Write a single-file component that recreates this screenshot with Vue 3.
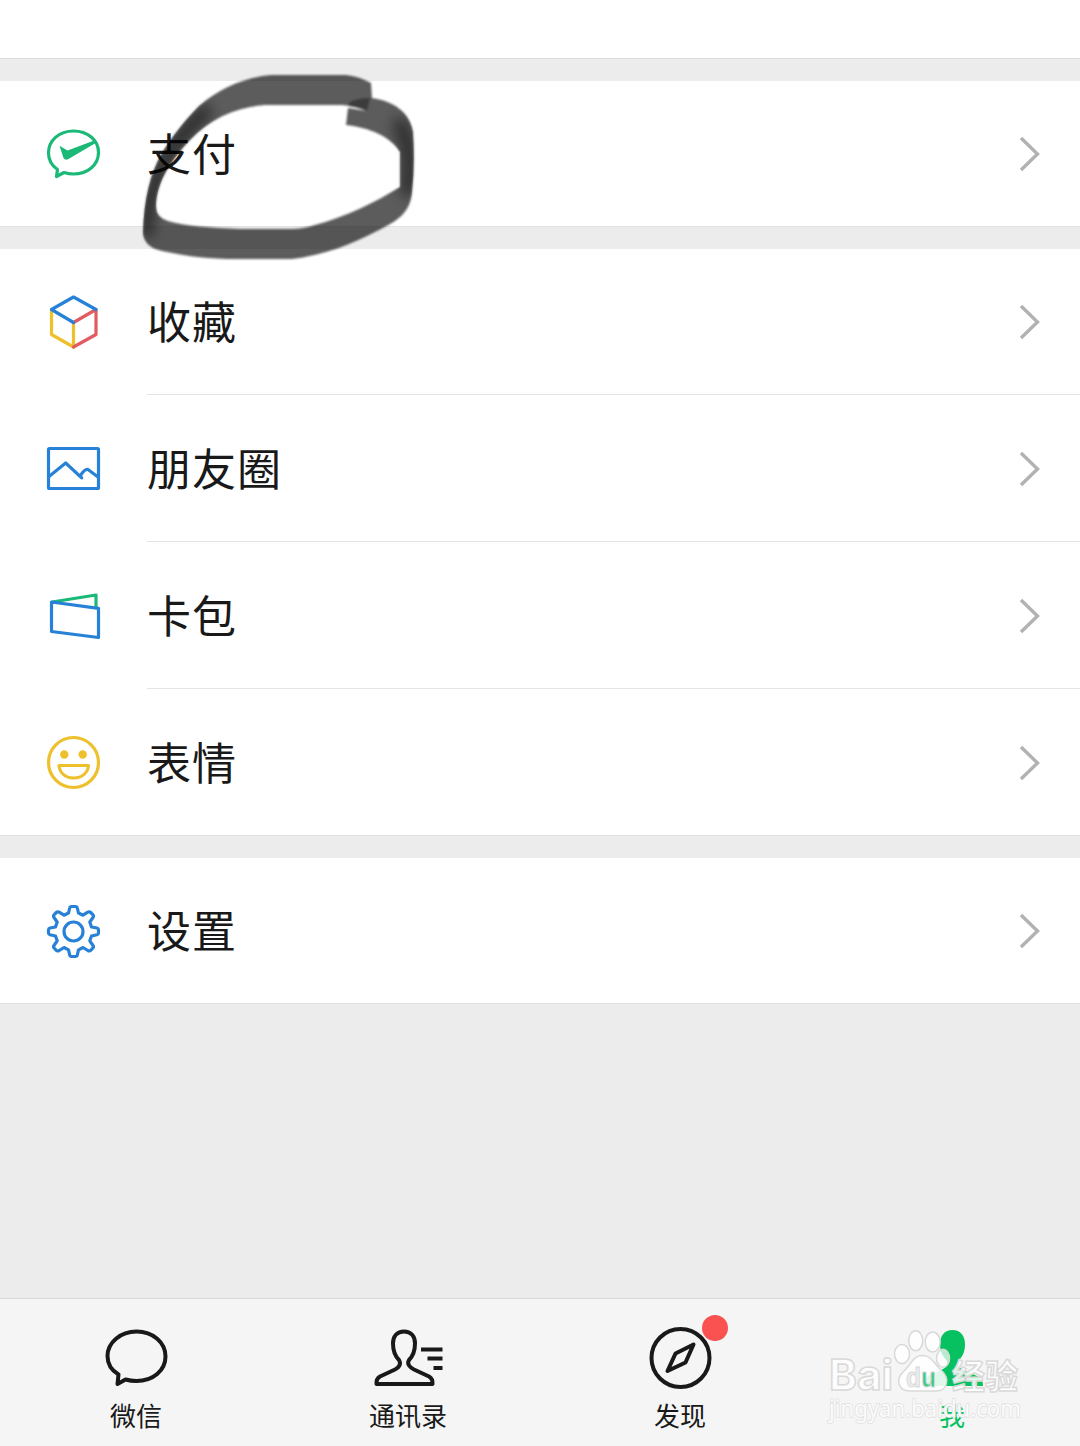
<script setup>
import { ref } from 'vue';

// Rows are grouped the way the page splits them with grey gaps.
const groups = [
	[{ id: 'pay', label: '支付' }],
	[
		{ id: 'favorites', label: '收藏' },
		{ id: 'moments', label: '朋友圈' },
		{ id: 'cards', label: '卡包' },
		{ id: 'stickers', label: '表情' },
	],
	[{ id: 'settings', label: '设置' }],
];

const tabs = [
	{ id: 'chats', label: '微信' },
	{ id: 'contacts', label: '通讯录' },
	{ id: 'discover', label: '发现', dot: true },
	{ id: 'me', label: '我' },
];

const activeTab = ref('me');
</script>

<template>
	<div class="page">
		<div class="profile-end"></div>

		<section v-for="(rows, i) in groups" :key="i" class="group">
			<div v-for="row in rows" :key="row.id" class="row">
				<svg class="row-icon" viewBox="0 0 60 60" fill="none" stroke-width="3.200" stroke-linejoin="round">
					<g v-if="row.id === 'pay'" class="green">
						<path d="M13.500 45.500 C7 41 4.500 35 4.500 29 C4.500 16 15.500 7 29.500 7 C43.500 7 54.500 16 54.500 28.500 C54.500 41 43.500 50 29.500 50 C26 50 23 49.500 20 48.500 L12.500 52.500 Z" />
						<path class="fill" d="M15.500 21.800 L23.500 26.500 L51.500 16 L52.500 18.500 L24.500 35 Q21.500 37 19.500 34 Z" />
					</g>
					<g v-else-if="row.id === 'favorites'" stroke-linecap="round">
						<path class="yellow" d="M7.500 17.500 V42.500 L29.500 55 V30.500" />
						<path class="red" d="M29.500 55 L52 42.500 V17.500 L29.500 30.500" />
						<path class="blue" d="M29.500 30.500 L7.500 17.500 L29.500 5 L52 17.500" />
					</g>
					<g v-else-if="row.id === 'moments'" class="blue">
						<rect x="4.500" y="10.500" width="50" height="40" rx="1" />
						<path d="M5 38.500 L21.700 25 L37.700 39.800 L34 36.500 M36.500 37.500 Q41 30.500 44 31.500 L54 39" />
					</g>
					<g v-else-if="row.id === 'cards'">
						<path class="green" d="M8 17 L52 10 V22" />
						<path class="blue" d="M7.500 17 L54.500 23.300 V52.500 L7.500 46.500 Z" />
					</g>
					<g v-else-if="row.id === 'stickers'" class="yellow">
						<circle cx="29.500" cy="30.500" r="25" />
						<circle class="dot" cx="20.300" cy="22.500" r="4.200" />
						<circle class="dot" cx="38.700" cy="22.500" r="4.200" />
						<path d="M15 33.500 H44.500 C44 40.500 38 46 29.750 46 C21 46 15.500 40.500 15 33.500 Z" />
					</g>
					<g v-else class="blue">
						<path d="M27.500 5.500 H31.500 Q33 5.500 33.300 7 L34.500 12 L39 14.200 L43.800 11.200 Q45.500 10.300 46.700 11.500 L48.800 13.600 Q50 15 49 16.500 L45.800 21 L47.500 26 L53 27 Q54.500 27.500 54.500 29 V32 Q54.500 33.300 53 33.700 L47.500 35 L45.800 39.800 L49 44.500 Q50 46 48.800 47.200 L46.700 49.300 Q45.500 50.500 43.800 49.500 L39 46.500 L34.500 48.800 L33.300 54 Q33 55.500 31.500 55.500 H27.500 Q26 55.500 25.700 54 L24.500 48.800 L20 46.500 L15.200 49.500 Q13.500 50.500 12.300 49.300 L10.200 47.200 Q9 46 10 44.500 L13.200 39.800 L11.500 35 L6 33.700 Q4.500 33.300 4.500 32 V29 Q4.500 27.500 6 27 L11.500 26 L13.200 21 L10 16.500 Q9 15 10.200 13.600 L12.300 11.500 Q13.500 10.300 15.200 11.200 L20 14.200 L24.500 12 L25.700 7 Q26 5.500 27.500 5.500 Z" />
						<circle cx="29.500" cy="30.500" r="9.500" />
					</g>
				</svg>
				<div class="row-body">
					<span class="row-label">{{ row.label }}</span>
					<svg class="chevron" viewBox="0 0 22 36"><path d="M2 2 L18.500 18 L2 34" /></svg>
				</div>
			</div>
		</section>

		<nav class="tabbar">
			<div v-for="tab in tabs" :key="tab.id" class="tab" :class="{ active: tab.id === activeTab }">
				<div class="tab-icon">
					<svg viewBox="0 0 80 70">
						<path v-if="tab.id === 'chats'" d="M22.500 54.500 C15 50 11.500 43.500 11.500 36 C11.500 22.500 24.500 11.500 40.500 11.500 C57 11.500 69.500 22.500 69.500 36.500 C69.500 50.500 57 61 40.500 61 C36.500 61 33 60.500 29.500 59.500 L21.500 64 Z" />
						<g v-else-if="tab.id === 'contacts'">
							<path d="M36 11.500 C29 11.500 25 16.500 25 23.500 C25 32 27 36 31 40 C33.500 44 31 47.500 27 49.500 L12 56.500 Q8 59 8.500 64 H64.500 Q65 59 61 56.500 L46 49.500 C42 47.500 38.500 44 41 40 C45 36 47 32 47 23.500 C47 16.500 43 11.500 36 11.500 Z" />
							<path d="M53 29.500 H74.500 M59.500 38.500 H74.500 M65.500 48 H74.500" />
						</g>
						<g v-else-if="tab.id === 'discover'">
							<circle cx="40.500" cy="38" r="29" />
							<path d="M27.500 51 L35.500 33.500 L53.500 24.500 L45.500 42.500 Z" />
						</g>
						<path v-else class="solid" d="M40.500 10 C32.500 10 28 16 28 24 C28 31 30.500 36 34.500 40 C36.500 44 34.500 47.500 31 49 L14 57 Q10 59.500 10.500 66 H71 Q71 59.500 67 57 L50 49 C46.500 47.500 45 44 47 40 C51 36 53 31 53 24 C53 16 48.500 10 40.500 10 Z" />
					</svg>
					<i v-if="tab.dot" class="badge"></i>
				</div>
				<span class="tab-label">{{ tab.label }}</span>
			</div>
		</nav>

		<!-- hand-drawn marker ring around the first row -->
		<svg class="marker" viewBox="130 60 300 210">
			<defs>
				<filter id="soft"><feGaussianBlur stdDeviation="1.100" /></filter>
				<filter id="softer" x="-30%" y="-30%" width="160%" height="160%"><feGaussianBlur stdDeviation="7" /></filter>
				<clipPath id="ring">
					<path d="M371 83 Q358 76 346 75 H272 C245 77 220 88 199 106 C184 121 172 137 162 153 C150 174 144 199 143 233 Q144 247 162 251 C190 257 210 259 236 259 H292 C325 255 352 244 377 231 C397 221 410 214 412 192 Q415 165 413 132 C410 112 393 101 372 98 Z M367 111 L348 108 L346 125 C370 128 390 136 400 152 V187 C376 202 345 217 315 225 Q303 229 292 229 H240 C210 228 185 226 168 221 Q156 217 156 207 C156 182 172 159 190 140 C211 118 237 107 265 105 H342 Q355 106 367 111 Z" clip-rule="evenodd" />
				</clipPath>
			</defs>
			<g filter="url(#soft)">
				<path class="ink" fill-rule="evenodd" d="M371 83 Q358 76 346 75 H272 C245 77 220 88 199 106 C184 121 172 137 162 153 C150 174 144 199 143 233 Q144 247 162 251 C190 257 210 259 236 259 H292 C325 255 352 244 377 231 C397 221 410 214 412 192 Q415 165 413 132 C410 112 393 101 372 98 Z M367 111 L348 108 L346 125 C370 128 390 136 400 152 V187 C376 202 345 217 315 225 Q303 229 292 229 H240 C210 228 185 226 168 221 Q156 217 156 207 C156 182 172 159 190 140 C211 118 237 107 265 105 H342 Q355 106 367 111 Z" />
				<path class="ink-overlap" d="M350 102 Q357 98 370 98 L367 111 Q358 107 348 106 Z" />
			</g>
			<g clip-path="url(#ring)">
				<path class="ink-core" filter="url(#softer)" d="M205 112 C175 138 148 180 146 230 M400 125 Q414 150 408 190" />
			</g>
		</svg>

		<svg class="watermark" viewBox="0 0 210 110">
			<defs>
				<linearGradient id="du-fill" gradientUnits="userSpaceOnUse" x1="86" y1="0" x2="116" y2="0">
					<stop offset="0.550" stop-color="#ececec" />
					<stop offset="0.560" stop-color="#3fca80" />
				</linearGradient>
			</defs>
			<g class="mark">
				<ellipse cx="82" cy="44" rx="7.500" ry="9.500" />
				<ellipse cx="95.700" cy="30.700" rx="7" ry="10" />
				<ellipse cx="112.700" cy="32" rx="7.500" ry="10" />
				<ellipse cx="123" cy="48.300" rx="6.500" ry="9" class="veil" />
				<path d="M102 45.500 C112 45.500 114 54 121 60 C131 69 127 81 116 81 H90 C78 81 75 69 84 61 C91 55 93 45.500 102 45.500 Z" />
				<text x="9" y="80" class="latin" textLength="64" lengthAdjust="spacingAndGlyphs">Bai</text>
				<text x="86" y="77" class="du" textLength="30" lengthAdjust="spacingAndGlyphs">du</text>
				<text x="132" y="78.500" class="han" textLength="66" lengthAdjust="spacingAndGlyphs">经验</text>
				<text x="9" y="107" class="url" textLength="192" lengthAdjust="spacingAndGlyphs">jingyan.baidu.com</text>
			</g>
		</svg>
	</div>
</template>

<style>
body {
	margin: 0;
}
</style>

<style scoped>
.page {
	position: relative;
	display: flex;
	flex-direction: column;
	box-sizing: border-box;
	width: 1080px;
	height: 1446px;
	overflow: hidden;
	background: #ececec;
	color: #191919;
	font-family: "Noto Sans CJK SC", sans-serif;
}
.profile-end {
	height: 58px;
	margin-bottom: 22px;
	background: #fff;
	border-bottom: 1px solid #dcdcdc;
}
.group {
	margin-bottom: 23px;
	background: #fff;
	box-shadow: 0 1px #e2e2e2;
}
.row {
	display: flex;
	height: 145px;
	padding-left: 44px;
}
.row + .row {
	height: 147px;
}
.row-icon {
	width: 60px;
	height: 60px;
	margin-top: 43px;
	flex: none;
}
.row + .row .row-icon {
	margin-top: 44px;
}
.row-body {
	flex: 1;
	display: flex;
	align-items: center;
	justify-content: space-between;
	margin-left: 43px;
	padding-right: 39px;
}
.row + .row .row-body {
	padding-top: 1px;
	border-top: 1px solid #e4e4e4;
}
.row-label {
	padding-bottom: 4px;
	font-size: 44px;
	line-height: 60px;
	letter-spacing: 1px;
}
.chevron {
	width: 22px;
	height: 36px;
	fill: none;
	stroke: #b2b2b2;
	stroke-width: 3.4;
}
.green {
	stroke: #1bb978;
}
.green .fill {
	fill: #1bb978;
	stroke: none;
}
.blue {
	stroke: #2782d7;
}
.yellow {
	stroke: #edc02c;
}
.yellow .dot {
	fill: #edc02c;
	stroke: none;
}
.red {
	stroke: #e15b62;
}
.tabbar {
	display: flex;
	box-sizing: border-box;
	height: 148px;
	margin-top: auto;
	background: #f5f5f5;
	border-top: 1px solid #d8d8d8;
}
.tab {
	flex: 0 0 272px;
	display: flex;
	flex-direction: column;
	align-items: center;
}
.tab-icon {
	position: relative;
	width: 80px;
	height: 70px;
	margin-top: 21px;
}
.tab-icon svg {
	display: block;
	width: 80px;
	height: 70px;
	fill: none;
	stroke: #191919;
	stroke-width: 4;
	stroke-linejoin: round;
}
.tab-icon .solid {
	fill: #07c160;
	stroke: none;
}
.badge {
	position: absolute;
	top: -5px;
	right: -8px;
	width: 26px;
	height: 26px;
	border-radius: 50%;
	background: #fa5151;
}
.tab-label {
	margin-top: 7px;
	font-size: 26px;
	line-height: 36px;
}
.tab.active .tab-label {
	color: #07c160;
}
.marker {
	position: absolute;
	left: 130px;
	top: 60px;
	width: 300px;
	height: 210px;
}
.ink {
	fill: rgba(0, 0, 0, 0.64);
}
.ink-overlap {
	fill: rgba(0, 0, 0, 0.35);
}
.ink-core {
	fill: none;
	stroke: rgba(0, 0, 0, 0.55);
	stroke-width: 14;
	stroke-linecap: round;
}
.watermark {
	position: absolute;
	left: 820px;
	top: 1310px;
	width: 210px;
	height: 110px;
	overflow: visible;
}
.mark {
	fill: rgba(255, 255, 255, 0.88);
	stroke: #d9d9d9;
	stroke-width: 1.5;
	font-family: "Liberation Sans", "Noto Sans CJK SC", sans-serif;
}
.mark .veil {
	fill: rgba(255, 255, 255, 0.7);
}
.latin {
	font-family: Inter, sans-serif;
	font-size: 42px;
	font-weight: bold;
}
.du {
	fill: url(#du-fill);
	font-size: 28px;
	font-weight: bold;
	stroke-width: 1;
}
.han {
	font-size: 34px;
	font-weight: bold;
}
.url {
	font-family: "Noto Sans", sans-serif;
	font-size: 23px;
	stroke: #e0e0e0;
	paint-order: stroke;
}
</style>
